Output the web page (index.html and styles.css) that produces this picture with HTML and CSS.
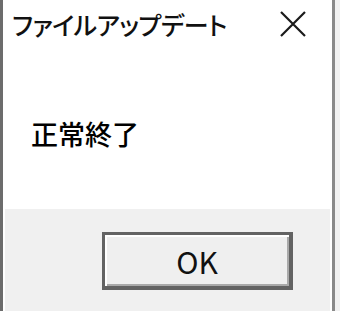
FILE: index.html
```html
<!DOCTYPE html>
<html lang="ja">
<head>
  <meta charset="UTF-8" />
  <title>ファイルアップデート</title>
  <link rel="stylesheet" href="styles.css">
</head>
<body>
  <div class="window">
    <div class="titlebar">
      <span class="title">ファイルアップデート</span>
      <button class="close" aria-label="閉じる">
        <svg width="26" height="26" viewBox="0 0 26 26">
          <path d="M1 1 L25 25 M25 1 L1 25" stroke="#1a1a1a" stroke-width="2.2" fill="none"/>
        </svg>
      </button>
    </div>
    <div class="content">
      <p class="message">正常終了</p>
    </div>
    <div class="footer">
      <button class="ok">OK</button>
    </div>
  </div>
  <div class="edge"></div>
</body>
</html>
```

FILE: styles.css
```css
body {
  margin: 0;
  height: 311px;
  display: flex;
  background: #f2f2f2;
  font-family: "Noto Sans CJK JP", sans-serif;
  color: #000;
}
.window {
  width: 335px;
  box-sizing: border-box;
  border-left: 3px solid #6c6c6c;
  border-right: 3px solid #8a8a8a;
  background: #fff;
  display: flex;
  flex-direction: column;
}
.titlebar {
  height: 48px;
  display: flex;
  align-items: center;
  padding-left: 9px;
}
.title {
  flex: 1;
  font-size: 25px;
  font-weight: 500;
  line-height: 1;
  letter-spacing: -0.5px;
  font-feature-settings: "palt";
  color: #111;
}
.close {
  width: 78px;
  height: 48px;
  border: 0;
  padding: 0;
  background: transparent;
  display: flex;
  align-items: center;
  justify-content: center;
}
.content {
  height: 161px;
  padding-left: 28px;
  box-sizing: border-box;
}
.message {
  margin: 0;
  padding-top: 72px;
  font-size: 27px;
  font-weight: 500;
  line-height: 1;
}
.footer {
  flex: 1;
  margin: 0 2px;
  background: #f0f0f0;
  padding: 23px 0 0 97px;
}
.ok {
  width: 191px;
  height: 58px;
  box-sizing: border-box;
  border: 3px solid #636363;
  border-right-width: 4px;
  border-bottom-width: 4px;
  background: #efefef;
  box-shadow: inset 2px 2px 0 #fff, inset -2px -2px 0 #a9a9a9;
  font-family: "Noto Sans CJK JP", sans-serif;
  font-size: 30px;
  line-height: 1;
  color: #111;
  padding: 0;
}
.edge {
  flex: 1;
  background: #f2f2f2;
}
```
